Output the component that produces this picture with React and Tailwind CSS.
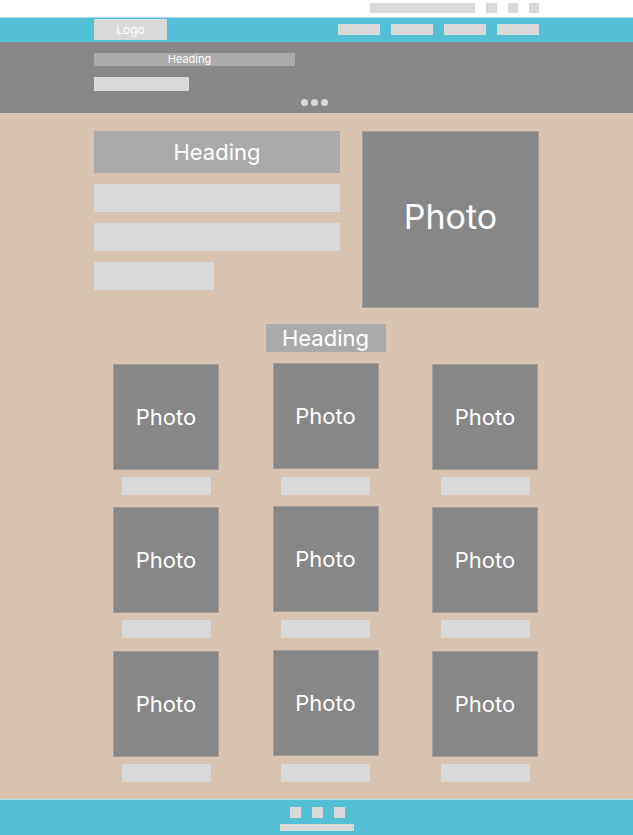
import React from "react";

const font = { fontFamily: "Inter, 'Noto Sans', sans-serif" };

function Cell({ mid, last }) {
  return (
    <div className={`flex flex-col items-center ${last ? "mt-px" : ""}`}>
      <div
        className={`w-[106px] h-[106px] bg-[#878787] border border-[#a59e97] flex items-center justify-center text-white text-[22px] ${mid ? "-mt-px" : ""}`}
      >
        Photo
      </div>
      <div className={`w-[89px] h-[18px] bg-[#d9d9d9] ${mid ? "mt-[8px]" : "mt-[7px]"}`} />
    </div>
  );
}

export default function App() {
  return (
    <div className="w-full min-h-[835px] bg-[#d8c4b0] flex flex-col" style={font}>
      {/* top strip */}
      <div className="h-[17px] bg-white">
        <div className="w-[445px] mx-auto flex justify-end items-start pt-[3px] gap-[11px]">
          <div className="w-[105px] h-[10px] bg-[#d9d9d9]" />
          <div className="w-[11px] h-[10px] bg-[#d9d9d9]" />
          <div className="w-[10px] h-[10px] bg-[#d9d9d9]" />
          <div className="w-[10px] h-[10px] bg-[#d9d9d9]" />
        </div>
      </div>

      {/* nav */}
      <div className="h-[25px] bg-[#54c0d5] border-t border-[#a9dfea]">
        <div className="w-[445px] mx-auto flex items-start justify-between">
          <div className="mt-px w-[73px] h-[21px] bg-[#d9d9d9] flex items-center justify-center text-white text-[12px]">
            Logo
          </div>
          <div className="flex gap-[11px] mt-[6px]">
            <div className="w-[42px] h-[11px] bg-[#d9d9d9]" />
            <div className="w-[42px] h-[11px] bg-[#d9d9d9]" />
            <div className="w-[42px] h-[11px] bg-[#d9d9d9]" />
            <div className="w-[42px] h-[11px] bg-[#d9d9d9]" />
          </div>
        </div>
      </div>

      {/* hero */}
      <div className="h-[71px] bg-[#878787]">
        <div className="w-[445px] mx-auto pt-[11px] flex flex-col">
          <div className="w-[201px] h-[13px] bg-[#aaaaaa] flex items-center justify-center pr-[10px] text-white text-[11px] leading-none">
            Heading
          </div>
          <div className="mt-[11px] w-[95px] h-[14px] bg-[#d9d9d9]" />
          <div className="mt-[8px] flex justify-center gap-[3px] pr-[4px]">
            <div className="w-[7px] h-[7px] rounded-full bg-[#d9d9d9]" />
            <div className="w-[7px] h-[7px] rounded-full bg-[#d9d9d9]" />
            <div className="w-[7px] h-[7px] rounded-full bg-[#d9d9d9]" />
          </div>
        </div>
      </div>

      {/* main */}
      <div className="flex-1 pt-[18px] pb-[17px]">
        <div className="w-[445px] mx-auto">
          <div className="flex justify-between">
            <div className="w-[246px] flex flex-col gap-[11px]">
              <div className="h-[42px] bg-[#aaaaaa] flex items-center justify-center text-white text-[22px]">
                Heading
              </div>
              <div className="h-[28px] bg-[#d9d9d9]" />
              <div className="h-[28px] bg-[#d9d9d9]" />
              <div className="h-[28px] w-[120px] bg-[#d9d9d9]" />
            </div>
            <div className="w-[177px] h-[177px] bg-[#878787] border border-[#a59e97] flex items-center justify-center pb-[6px] text-white text-[34px]">
              Photo
            </div>
          </div>

          <div className="pl-[19px] pr-px">
            <div className="mt-[16px] flex justify-center">
              <div className="w-[120px] h-[28px] bg-[#aaaaaa] flex items-center justify-center text-white text-[22px]">
                Heading
              </div>
            </div>
            <div className="mt-[12px] grid grid-cols-[106px_106px_106px] justify-between gap-y-[12px]">
              <Cell />
              <Cell mid />
              <Cell />
              <Cell />
              <Cell mid />
              <Cell />
              <Cell last />
              <Cell mid last />
              <Cell last />
            </div>
          </div>
        </div>
      </div>

      {/* footer */}
      <div className="h-[36px] bg-[#54c0d5] border-t border-[#a9dfea] flex flex-col items-center pt-[7px]">
        <div className="flex gap-[11px] pl-px">
          <div className="w-[11px] h-[11px] bg-[#d9d9d9]" />
          <div className="w-[11px] h-[11px] bg-[#d9d9d9]" />
          <div className="w-[11px] h-[11px] bg-[#d9d9d9]" />
        </div>
        <div className="mt-[6px] w-[74px] h-[7px] bg-[#d9d9d9]" />
      </div>
    </div>
  );
}
